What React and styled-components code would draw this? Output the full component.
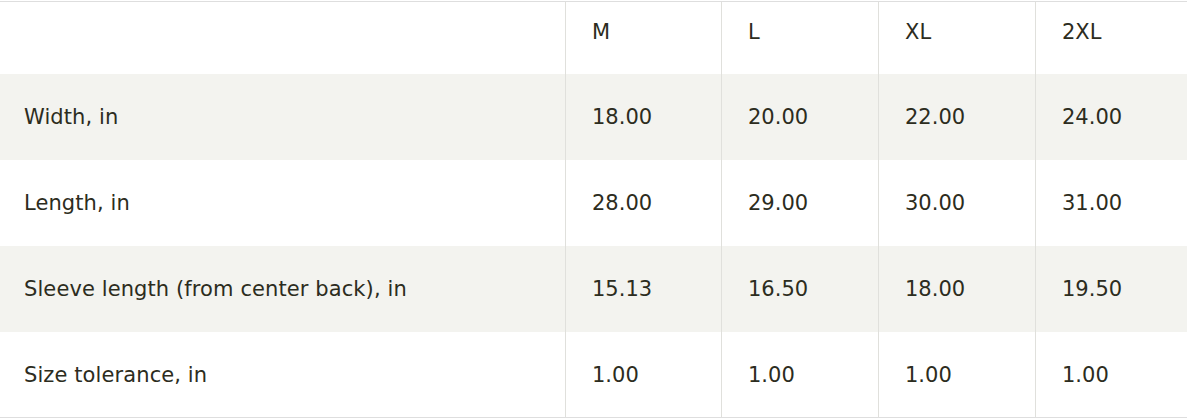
import React from "react";
import styled, { createGlobalStyle } from "styled-components";

const sizes = ["M", "L", "XL", "2XL"];

const rows = [
  { label: "Width, in", values: ["18.00", "20.00", "22.00", "24.00"] },
  { label: "Length, in", values: ["28.00", "29.00", "30.00", "31.00"] },
  { label: "Sleeve length (from center back), in", values: ["15.13", "16.50", "18.00", "19.50"] },
  { label: "Size tolerance, in", values: ["1.00", "1.00", "1.00", "1.00"] },
];

const GlobalStyle = createGlobalStyle`
  body {
    margin: 0;
    background: #ffffff;
    font-family: "DejaVu Sans", "Liberation Sans", sans-serif;
    color: #2c2c20;
  }
`;

const Table = styled.div`
  margin-top: 1px;
  width: 1192px;
  border-top: 1px solid #dedede;
  border-bottom: 1px solid #dedede;
`;

const Row = styled.div`
  display: grid;
  grid-template-columns: 565px 156px 157px 157px 157px;
  height: ${(p) => (p.$header ? 72 : 86)}px;
  background: ${(p) => (p.$striped ? "#f3f3ef" : "#ffffff")};

  &:last-child {
    height: 85px;
  }
`;

const Cell = styled.div`
  display: flex;
  align-items: ${(p) => (p.$header ? "flex-start" : "center")};
  padding: ${(p) => (p.$header ? "17px" : "0")} 0 0 ${(p) => (p.$first ? 24 : 26)}px;
  border-left: ${(p) => (p.$first ? "none" : "1px solid #e0e0dc")};
  font-size: 21px;
  line-height: 26px;
  letter-spacing: ${(p) => (p.$first ? "0.1px" : "0")};
  white-space: nowrap;
`;

export default function App() {
  return (
    <>
      <GlobalStyle />
      <Table>
        <Row $header>
          <Cell $header $first />
          {sizes.map((s) => (
            <Cell $header key={s}>
              {s}
            </Cell>
          ))}
        </Row>
        {rows.map((r, i) => (
          <Row key={r.label} $striped={i % 2 === 0}>
            <Cell $first>{r.label}</Cell>
            {r.values.map((v, j) => (
              <Cell key={j}>{v}</Cell>
            ))}
          </Row>
        ))}
      </Table>
    </>
  );
}
